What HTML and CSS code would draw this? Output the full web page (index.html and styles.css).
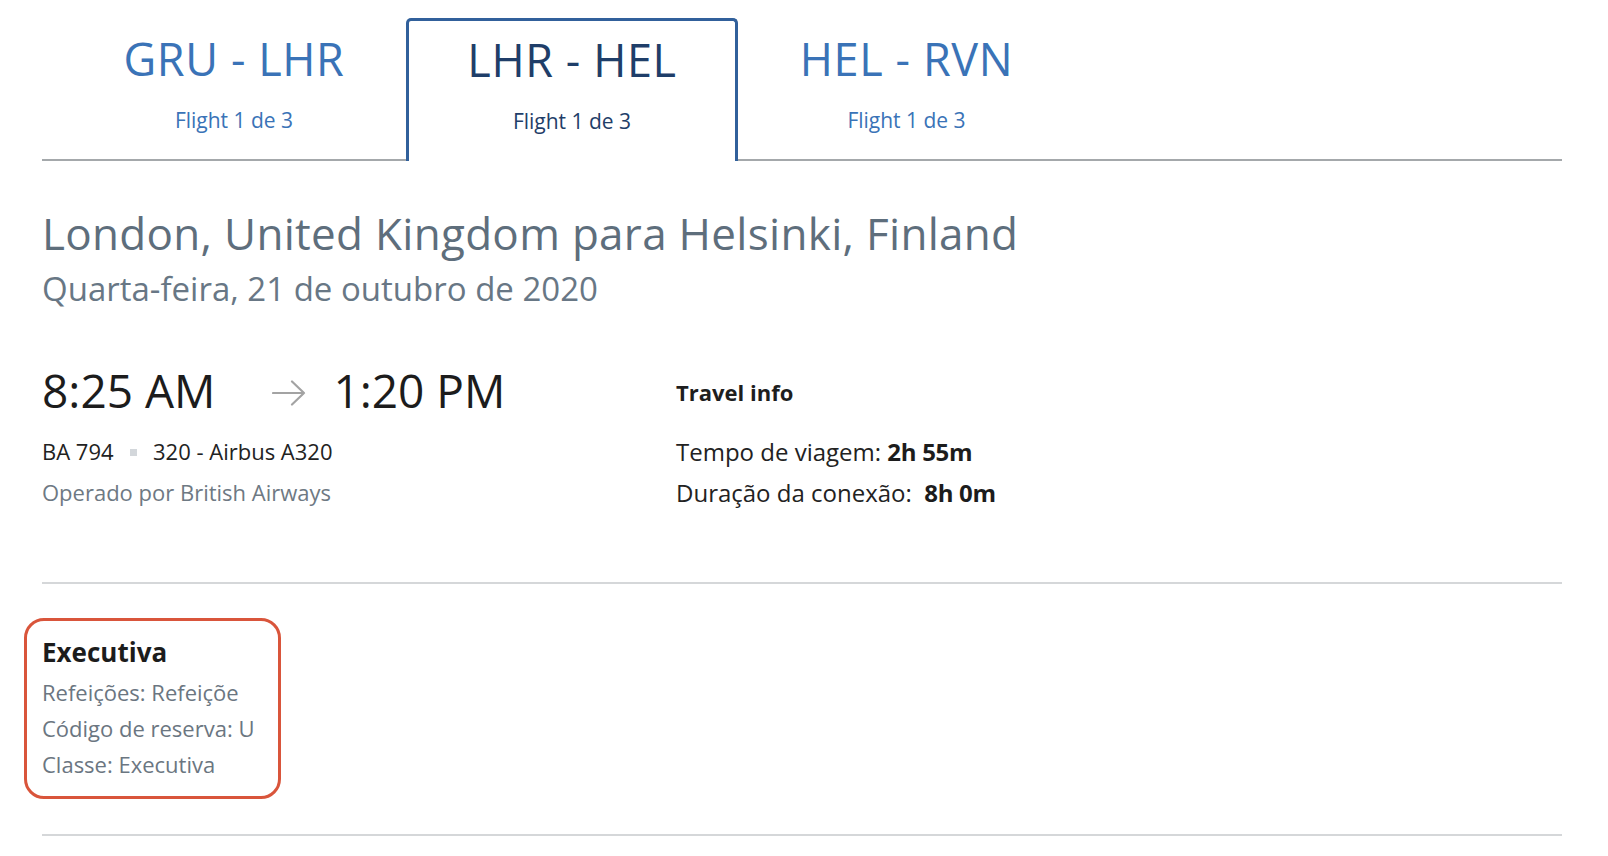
FILE: index.html
```html
<!DOCTYPE html>
<html lang="pt">
<head>
<meta charset="utf-8">
<title>LHR - HEL</title>
<link rel="stylesheet" href="styles.css">
</head>
<body>
<div class="page">
  <nav class="tabs">
    <div class="tab tab-first">
      <div class="tab-title">GRU - LHR</div>
      <div class="tab-sub">Flight 1 de 3</div>
    </div>
    <div class="tab active">
      <div class="tab-title">LHR - HEL</div>
      <div class="tab-sub">Flight 1 de 3</div>
    </div>
    <div class="tab tab-last">
      <div class="tab-title">HEL - RVN</div>
      <div class="tab-sub">Flight 1 de 3</div>
    </div>
  </nav>

  <header class="route">
    <h1 class="route-title">London, United Kingdom para Helsinki, Finland</h1>
    <div class="route-date">Quarta-feira, 21 de outubro de 2020</div>
  </header>

  <section class="flight">
    <div class="flight-main">
      <div class="times">
        <span class="time">8:25 AM</span>
        <svg class="arrow" width="34" height="26" viewBox="0 0 34 26" aria-hidden="true">
          <path d="M1 13 H32 M20 1.5 L32 13 L20 24.5" fill="none" stroke="#a3a3a3" stroke-width="2.2" stroke-linecap="round" stroke-linejoin="round"/>
        </svg>
        <span class="time">1:20 PM</span>
      </div>
      <div class="meta">
        <div class="meta-line dark">BA 794 <span class="dot"></span> 320 - Airbus A320</div>
        <div class="meta-line muted">Operado por British Airways</div>
      </div>
    </div>
    <div class="flight-info">
      <div class="info-title">Travel info</div>
      <div class="meta">
        <div class="meta-line dark">Tempo de viagem: <b>2h 55m</b></div>
        <div class="meta-line dark">Duração da conexão:&nbsp; <b>8h 0m</b></div>
      </div>
    </div>
  </section>

  <section class="fare">
    <div class="fare-card">
      <div class="fare-title">Executiva</div>
      <div class="fare-line">Refeições: Refeiçõe</div>
      <div class="fare-line">Código de reserva: U</div>
      <div class="fare-line">Classe: Executiva</div>
    </div>
  </section>
</div>
</body>
</html>
```

FILE: styles.css
```css
* { box-sizing: border-box; }

html, body {
  margin: 0;
  padding: 0;
  background: #ffffff;
}

body {
  font-family: "Open Sans", "Noto Sans", sans-serif;
  color: #1c1c1c;
}

.page {
  padding: 0 46px 0 42px;
}

/* Tabs */
.tabs {
  display: flex;
  padding-top: 18px;
  padding-left: 20px;
  border-bottom: 2px solid #a4a8ab;
}

.tab {
  width: 332px;
  padding: 18px 0 27px;
  text-align: center;
  color: #3a73b7;
}

.tab-first { width: 344px; }
.tab-last { width: 337px; }

.tab.active {
  padding-top: 16px;
  padding-bottom: 29px;
  border: 3px solid #31609b;
  border-bottom: none;
  border-radius: 5px 5px 0 0;
  margin-bottom: -2px;
  background: #ffffff;
  color: #1f3e69;
}

.tab-title {
  font-size: 45px;
  line-height: 45px;
  letter-spacing: 0.6px;
}

.tab-sub {
  margin-top: 29px;
  font-size: 21px;
  line-height: 21px;
}

/* Route heading */
.route {
  padding-top: 46px;
}

.route-title {
  margin: 0;
  font-weight: 400;
  font-size: 44px;
  line-height: 52px;
  letter-spacing: 0.3px;
  color: #5e6e7c;
}

.route-date {
  margin-top: 10px;
  font-size: 33px;
  line-height: 40px;
  color: #687785;
}

/* Flight details */
.flight {
  display: flex;
  margin-top: 53px;
  padding-bottom: 69px;
  border-bottom: 2px solid #d5d7d9;
}

.flight-main {
  width: 634px;
}

.times {
  display: flex;
  align-items: center;
  height: 56px;
}

.time {
  font-size: 46px;
  line-height: 56px;
  color: #1c1c1c;
}

.arrow {
  margin: 6px 27px 0 57px;
}

.meta {
  margin-top: 13px;
}

.meta-line {
  font-size: 22px;
  line-height: 41px;
  white-space: nowrap;
}

.meta-line.dark { color: #222222; }
.meta-line.muted { color: #6e7983; }

.meta-line b {
  font-weight: 700;
  color: #1c1c1c;
}

.dot {
  display: inline-block;
  width: 7px;
  height: 7px;
  margin: 0 10px 0 11px;
  background: #d3d7db;
  vertical-align: 4px;
}

.flight-info {
  padding-top: 15px;
}

.info-title {
  font-size: 22px;
  line-height: 30px;
  font-weight: 700;
  color: #1e1e1e;
}

.flight-info .meta {
  margin-top: 24px;
}

.flight-info .meta-line {
  font-size: 24px;
}

.flight-info .meta-line b {
  letter-spacing: -0.3px;
}

/* Fare */
.fare {
  padding: 34px 0 35px;
  border-bottom: 2px solid #d5d7d9;
}

.fare-card {
  display: inline-block;
  width: 257px;
  margin-left: -18px;
  padding: 15px 10px 14px 15px;
  border: 3px solid #d9553b;
  border-radius: 20px;
}

.fare-title {
  font-size: 26px;
  line-height: 32px;
  font-weight: 700;
  color: #1c1c1c;
  margin-bottom: 6px;
}

.fare-line {
  font-size: 22px;
  line-height: 36px;
  color: #6b7681;
  white-space: nowrap;
}
```
